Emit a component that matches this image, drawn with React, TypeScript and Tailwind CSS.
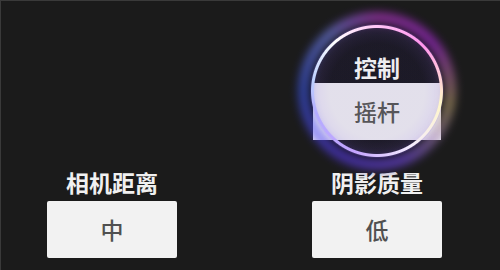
import React from "react";

const cjk = "font-['Noto_Sans_CJK_SC','Noto_Sans',sans-serif]";

const Setting = ({ label, value }: { label: string; value: string }) => (
  <div className="flex flex-col items-center w-[130px]">
    <div className={`${cjk} text-[23px] leading-[24px] font-bold text-[#f0f0f0]`}>{label}</div>
    <div
      className={`${cjk} mt-[7px] w-[130px] h-[57px] rounded-[2px] bg-[#f2f2f2] flex items-center justify-center text-[23px] font-medium text-[#505050]`}
    >
      {value}
    </div>
  </div>
);

const ControlRing = () => (
  <div className="absolute left-1/2 top-[-31px] w-[134px] h-[134px] -translate-x-1/2 pointer-events-none">
    {/* tint inside the ring */}
    <div className="absolute inset-0 rounded-full bg-[radial-gradient(circle,rgba(200,180,255,0.05)_50%,rgba(150,110,255,0.3)_100%)]" />
    {/* outer glow */}
    <div className="absolute inset-[-12px] blur-[5px] opacity-70">
      <div className="w-full h-full rounded-full bg-[conic-gradient(from_0deg,#d040e0,#c030f0_50deg,#c8b070_100deg,#8050ff_160deg,#6040ff_210deg,#4060ff_270deg,#8090ff_320deg,#d040e0)] [mask-image:radial-gradient(circle,transparent_66px,#000_72px,#000_75px,transparent_84px)]" />
    </div>
    {/* ring core */}
    <div className="absolute inset-0 rounded-full bg-[conic-gradient(from_0deg,#ffc4f6,#ff94ee_45deg,#fff6c8_100deg,#f4ecff_150deg,#c4a4ff_200deg,#b4acff_250deg,#bcd0ff_280deg,#ffffff_320deg,#ffc4f6)] [mask-image:radial-gradient(circle,transparent_62.5px,#000_63.5px,#000_65.5px,transparent_66.5px)]" />
  </div>
);

export default function App() {
  return (
    <div className="w-[500px] h-[270px] box-border bg-[#1b1b1b] border-t border-l border-[#3a3a3a] flex pl-[46px] gap-[135px] overflow-hidden">
      {/* Left column */}
      <div className="flex flex-col justify-end pb-[12px]">
        <Setting label="相机距离" value="中" />
      </div>

      {/* Right column */}
      <div className="flex flex-col pt-[54px]">
        <div className="relative w-[130px] flex flex-col items-center">
          {/* dark halo behind the control */}
          <div className="absolute left-1/2 top-[-55px] w-[180px] h-[180px] -translate-x-1/2 rounded-full bg-[radial-gradient(circle,rgba(16,14,28,0.7)_40%,rgba(16,14,28,0)_70%)]" />
          <div className={`${cjk} relative text-[23px] leading-[24px] font-bold text-[#f0f0f0]`}>控制</div>
          <div
            className={`${cjk} relative mt-[4px] w-[128px] h-[57px] bg-[#e4e2ea] flex items-center justify-center text-[23px] font-medium text-[#505050]`}
          >
            摇杆
          </div>
          <ControlRing />
        </div>
        <div className="mt-[30px]">
          <Setting label="阴影质量" value="低" />
        </div>
      </div>
    </div>
  );
}
